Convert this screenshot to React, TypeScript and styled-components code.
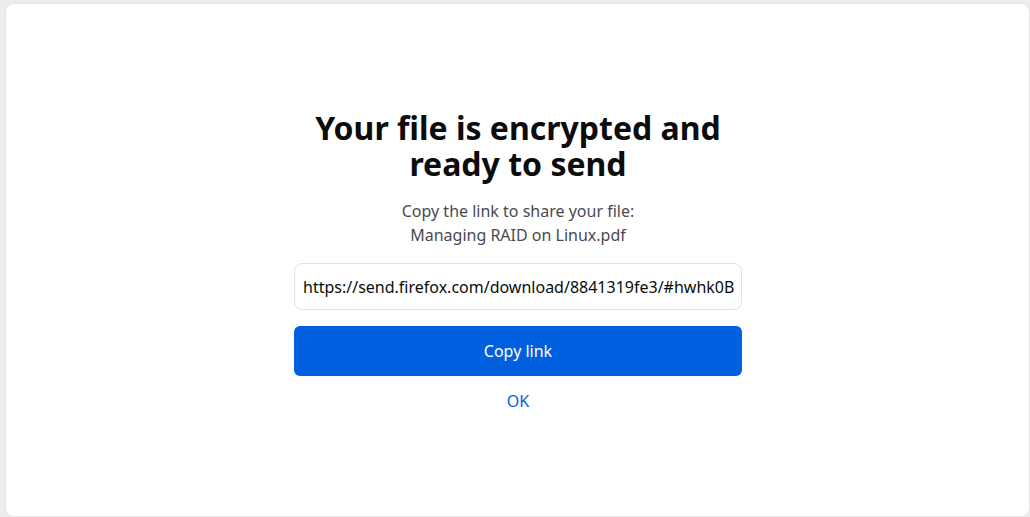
import React from 'react';
import styled, { createGlobalStyle } from 'styled-components';

// ----- global -----
const GlobalStyle = createGlobalStyle`
  html, body {
    margin: 0;
    padding: 0;
    background: #ededed;
    font-family: "Noto Sans", "Open Sans", sans-serif;
  }
  * { box-sizing: border-box; }
`;

// ----- styled-components -----
const Backdrop = styled.div`
  width: 1030px;
  height: 517px;
  padding: 4px 1px 1px 6px;
  background: #ededed;
`;

const Card = styled.div`
  width: 100%;
  height: 100%;
  background: #fff;
  border-radius: 8px;
  box-shadow: 0 0 3px rgba(0, 0, 0, 0.08);
  display: flex;
  flex-direction: column;
  align-items: center;
  padding: 106px 0 0 1px;
`;

const Title = styled.h1`
  margin: 0;
  width: 460px;
  text-align: center;
  font-size: 32px;
  line-height: 36px;
  font-weight: 700;
  color: #0c0c0d;
`;

const Subtitle = styled.p`
  margin: 17px 0 0;
  text-align: center;
  font-size: 16px;
  line-height: 24px;
  color: #4a4a4f;
`;

const LinkInput = styled.input`
  margin-top: 16px;
  width: 448px;
  height: 47px;
  padding: 0 2px 0 8px;
  border: 1px solid #e0e0e6;
  border-radius: 8px;
  font-family: inherit;
  font-size: 16px;
  color: #0c0c0d;
  outline: none;
`;

const PrimaryButton = styled.button`
  margin-top: 16px;
  width: 448px;
  height: 50px;
  border: none;
  border-radius: 6px;
  background: #0060df;
  color: #fff;
  font-family: inherit;
  font-size: 16px;
  cursor: pointer;
`;

const TextButton = styled.button`
  margin-top: 13px;
  border: none;
  background: none;
  padding: 0;
  color: #0060df;
  font-family: inherit;
  font-size: 16px;
  line-height: 24px;
  cursor: pointer;
`;

const App: React.FC = () => {
  return (
    <>
      <GlobalStyle />
      <Backdrop>
        <Card>
          <Title>Your file is encrypted and ready to send</Title>
          <Subtitle>
            Copy the link to share your file:
            <br />
            Managing RAID on Linux.pdf
          </Subtitle>
          <LinkInput
            readOnly
            value="https://send.firefox.com/download/8841319fe3/#hwhk0B"
          />
          <PrimaryButton>Copy link</PrimaryButton>
          <TextButton>OK</TextButton>
        </Card>
      </Backdrop>
    </>
  );
};

export default App;
